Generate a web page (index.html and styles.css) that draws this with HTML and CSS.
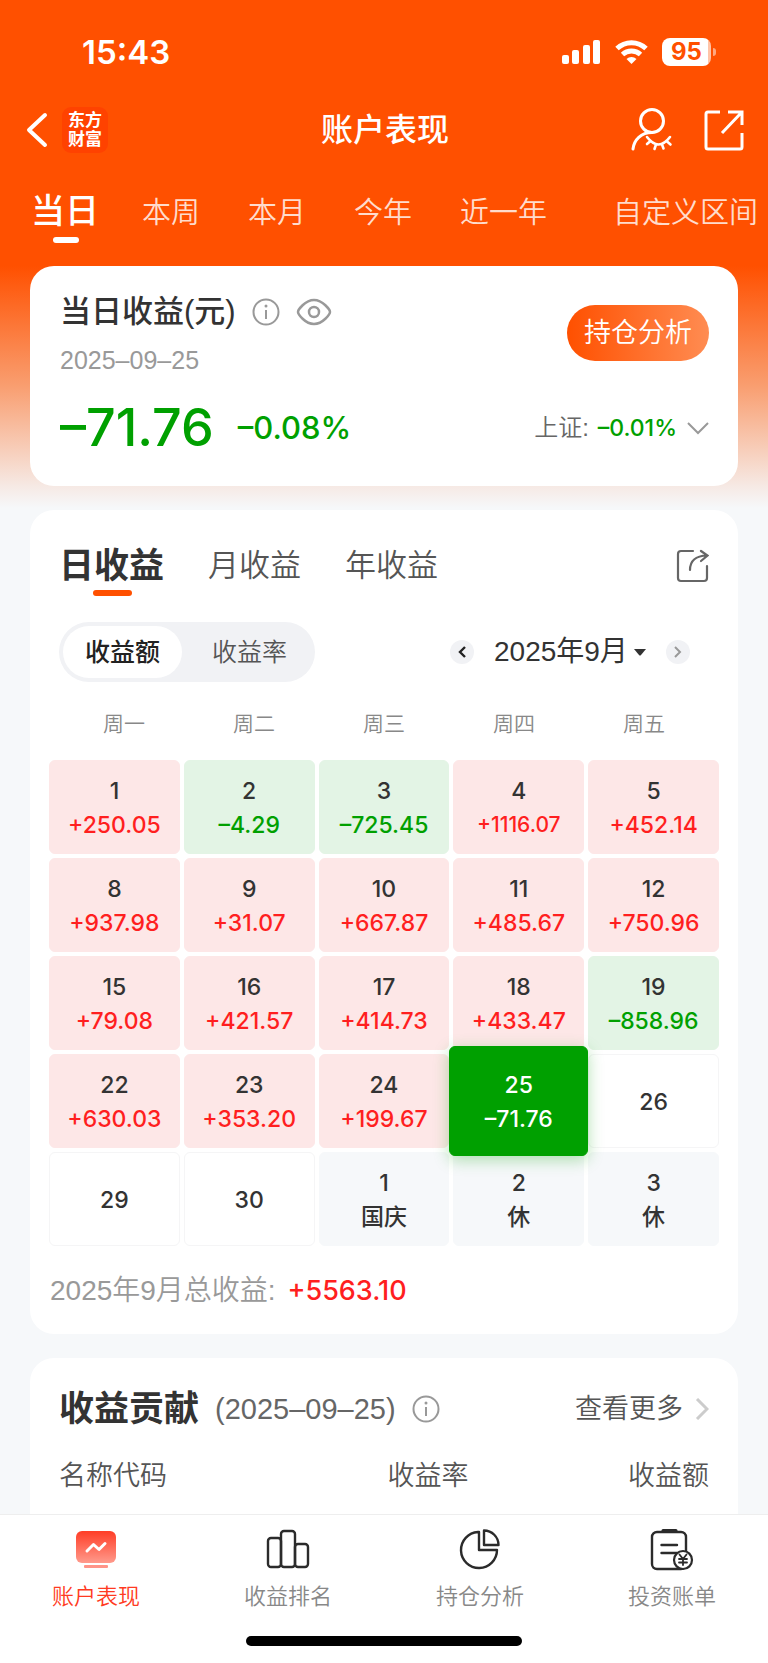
FILE: index.html
```html
<!DOCTYPE HTML>
<html lang="zh-CN">
<head>
	<meta charset="UTF-8">
	<meta name="viewport" content="width=device-width, initial-scale=1">
	<title>账户表现</title>
	<link rel="stylesheet" href="styles.css">
</head>
<body>
	<div class="top">
		<div class="status">
			<span class="status_time">15:43</span>
			<div class="status_icons">
				<svg width="39" height="25" viewBox="0 0 39 25" fill="#fff"><rect x="0" y="15" width="7" height="9" rx="2"/><rect x="10" y="10" width="7" height="14" rx="2"/><rect x="21" y="5" width="7" height="19" rx="2"/><rect x="31" y="0" width="7" height="24" rx="2"/></svg>
				<svg width="33" height="25" viewBox="0 0 33 25" fill="none" stroke="#fff" stroke-width="5"><path d="M2 8.500A21 21 0 0 1 31 8.500"/><path d="M7.500 14.500A13.500 13.500 0 0 1 25.500 14.500"/><path d="M16.500 24L11.500 19A7.500 7.500 0 0 1 21.500 19Z" fill="#fff" stroke="none"/></svg>
				<div class="battery">95</div>
			</div>
		</div>
		<!-- status end -->
		<header class="header">
			<div class="header_side">
				<button type="button" class="icon_btn" aria-label="返回"><svg width="22" height="36" viewBox="0 0 22 36" fill="none" stroke="#fff" stroke-width="4" stroke-linecap="round" stroke-linejoin="round"><path d="M19 3L3 18L19 33"/></svg></button>
				<span class="logo">东方<br>财富</span>
			</div>
			<h1 class="header_title">账户表现</h1>
			<div class="header_side header_right">
				<button type="button" class="icon_btn" aria-label="隐私"><svg width="44" height="46" viewBox="0 0 44 46" fill="none" stroke="#fff" stroke-width="3" stroke-linecap="round"><circle cx="22" cy="14" r="11.500"/><path d="M3 42C4 33 11 25.500 22 25.500"/><path d="M17 30Q28.500 45 40 30M20.500 34L17 37M26 37.500L24.500 42M32 37.500L33.500 41.500M36.500 34L40.500 37.500" stroke-width="2.600"/></svg></button>
				<button type="button" class="icon_btn" aria-label="分享"><svg width="40" height="41" viewBox="0 0 40 41" fill="none" stroke="#fff" stroke-width="3"><path d="M16 2H4Q2 2 2 4V37Q2 39 4 39H36Q38 39 38 37V23M24 2H38V15M18 23L37 3"/></svg></button>
			</div>
		</header>
		<!-- header end -->
		<nav class="tabs">
			<a href="#" class="tab current">当日</a>
			<a href="#" class="tab">本周</a>
			<a href="#" class="tab">本月</a>
			<a href="#" class="tab">今年</a>
			<a href="#" class="tab">近一年</a>
			<a href="#" class="tab">自定义区间</a>
		</nav>
	</div>
	<!-- top end -->

	<main class="main">
		<section class="card today">
			<div class="today_head">
				<div>
					<div class="today_title">
						<h2>当日收益(元)</h2>
						<svg width="28" height="28" viewBox="0 0 28 28" fill="none" stroke="#999" stroke-width="2"><circle cx="14" cy="14" r="12.500"/><path d="M14 12V21"/><circle cx="14" cy="8" r="1.500" fill="#999" stroke="none"/></svg>
						<button type="button" class="icon_btn" aria-label="显示金额"><svg width="36" height="28" viewBox="0 0 36 28" fill="none" stroke="#999" stroke-width="2.500"><path d="M2 14C2 12 9 2 18 2S34 12 34 14S27 26 18 26S2 16 2 14Z"/><circle cx="18" cy="14" r="5"/></svg></button>
					</div>
					<div class="today_date">2025–09–25</div>
				</div>
				<button type="button" class="btn_analysis">持仓分析</button>
			</div>
			<div class="today_data">
				<span class="today_value">–71.76</span>
				<span class="today_rate">–0.08%</span>
				<span class="today_index">上证: <b>–0.01%</b></span>
				<svg width="22" height="14" viewBox="0 0 22 14" fill="none" stroke="#999" stroke-width="2"><path d="M1 2L11 12L21 2"/></svg>
			</div>
		</section>
		<!-- today end -->

		<section class="card profit">
			<div class="profit_tabs">
				<button type="button" class="profit_tab current">日收益</button>
				<button type="button" class="profit_tab">月收益</button>
				<button type="button" class="profit_tab">年收益</button>
				<button type="button" class="icon_btn profit_share" aria-label="分享收益"><svg width="33" height="34" viewBox="0 0 33 34" fill="none" stroke="#666" stroke-width="2.200" stroke-linecap="round"><path d="M17 2H5Q2 2 2 5V29Q2 32 5 32H28Q31 32 31 29V17M14 21Q14 7 31 6.500M25 2L31.500 6.500L25 12"/></svg></button>
			</div>
			<div class="profit_bar">
				<div class="switch">
					<button type="button" class="switch_item current">收益额</button>
					<button type="button" class="switch_item">收益率</button>
				</div>
				<div class="month">
					<button type="button" class="month_btn" aria-label="上个月"><svg width="8" height="12" viewBox="0 0 8 12" fill="none" stroke="#222" stroke-width="2.400"><path d="M7 1L2 6L7 11"/></svg></button>
					<label class="month_pick">
						<select aria-label="选择月份"><option>2025年9月</option></select>
						<svg width="12" height="7" viewBox="0 0 12 7" fill="#333"><path d="M0 0H12L7 6Q6 7 5 6Z"/></svg>
					</label>
					<button type="button" class="month_btn" aria-label="下个月"><svg width="8" height="12" viewBox="0 0 8 12" fill="none" stroke="#999" stroke-width="2"><path d="M1 1L6 6L1 11"/></svg></button>
				</div>
			</div>
			<div class="week">
				<span>周一</span><span>周二</span><span>周三</span><span>周四</span><span>周五</span>
			</div>
			<div class="days">
				<button type="button" class="day up">1<b>+250.05</b></button>
				<button type="button" class="day down">2<b>–4.29</b></button>
				<button type="button" class="day down">3<b>–725.45</b></button>
				<button type="button" class="day up long">4<b>+1116.07</b></button>
				<button type="button" class="day up">5<b>+452.14</b></button>

				<button type="button" class="day up">8<b>+937.98</b></button>
				<button type="button" class="day up">9<b>+31.07</b></button>
				<button type="button" class="day up">10<b>+667.87</b></button>
				<button type="button" class="day up">11<b>+485.67</b></button>
				<button type="button" class="day up">12<b>+750.96</b></button>

				<button type="button" class="day up">15<b>+79.08</b></button>
				<button type="button" class="day up">16<b>+421.57</b></button>
				<button type="button" class="day up">17<b>+414.73</b></button>
				<button type="button" class="day up">18<b>+433.47</b></button>
				<button type="button" class="day down">19<b>–858.96</b></button>

				<button type="button" class="day up">22<b>+630.03</b></button>
				<button type="button" class="day up">23<b>+353.20</b></button>
				<button type="button" class="day up">24<b>+199.67</b></button>
				<button type="button" class="day selected">25<b>–71.76</b></button>
				<button type="button" class="day">26</button>

				<button type="button" class="day">29</button>
				<button type="button" class="day">30</button>
				<button type="button" class="day rest">1<b>国庆</b></button>
				<button type="button" class="day rest">2<b>休</b></button>
				<button type="button" class="day rest">3<b>休</b></button>
			</div>
			<!-- days end -->
			<p class="total">2025年9月总收益: <b>+5563.10</b></p>
		</section>
		<!-- profit end -->

		<section class="card contrib">
			<div class="contrib_head">
				<h2>收益贡献</h2>
				<span class="contrib_date">(2025–09–25)</span>
				<svg width="28" height="28" viewBox="0 0 28 28" fill="none" stroke="#999" stroke-width="2"><circle cx="14" cy="14" r="12.500"/><path d="M14 12V21"/><circle cx="14" cy="8" r="1.500" fill="#999" stroke="none"/></svg>
				<a href="#" class="more">查看更多<svg width="14" height="22" viewBox="0 0 14 22" fill="none" stroke="#ccc" stroke-width="3"><path d="M2 1L12 11L2 21"/></svg></a>
			</div>
			<table class="contrib_table">
				<thead>
					<tr><th scope="col">名称代码</th><th scope="col">收益率</th><th scope="col">收益额</th></tr>
				</thead>
			</table>
		</section>
		<!-- contrib end -->
	</main>

	<footer class="footer">
		<nav class="menu">
			<a href="#" class="menu_item current">
				<svg width="44" height="44" viewBox="0 0 44 44"><defs><linearGradient id="screen" x1="0" y1="0" x2="0" y2="1"><stop offset="0" stop-color="#ff3d26"/><stop offset="1" stop-color="#ff9a8c"/></linearGradient></defs><rect x="2" y="3" width="40" height="32" rx="6" fill="url(#screen)"/><rect x="10" y="37" width="24" height="3" rx="1" fill="#ff9488"/><path d="M13 23L19.500 16.500L25 21.500L31 15.500" fill="none" stroke="#fff" stroke-width="3" stroke-linecap="round" stroke-linejoin="round"/></svg>
				账户表现
			</a>
			<a href="#" class="menu_item">
				<svg width="44" height="44" viewBox="0 0 44 44" fill="none" stroke="#2b2b2b" stroke-width="2.400"><rect x="2" y="10" width="13" height="29" rx="3"/><rect x="15" y="3" width="14" height="36" rx="3"/><rect x="29" y="16" width="13" height="23" rx="3"/></svg>
				收益排名
			</a>
			<a href="#" class="menu_item">
				<svg width="44" height="44" viewBox="0 0 44 44" fill="none" stroke="#2b2b2b" stroke-width="2.400" stroke-linejoin="round"><path d="M20 4A18 18 0 1 0 39 22H21V4Z"/><path d="M26 2.500V17H40.500C40.500 9 34 2.500 26 2.500Z"/></svg>
				持仓分析
			</a>
			<a href="#" class="menu_item">
				<svg width="44" height="44" viewBox="0 0 44 44" fill="none" stroke="#2b2b2b" stroke-width="2.400" stroke-linecap="round"><rect x="2" y="4" width="34" height="37" rx="5"/><path d="M13 2.500H26" stroke-width="3"/><path d="M11.500 17H27M11.500 25H27"/><circle cx="33" cy="32" r="9" fill="#fff" stroke-width="2.200"/><path d="M29.500 26.500L33 31L36.500 26.500M33 31V37M29 31H37M29 34.500H37" stroke-width="1.800"/></svg>
				投资账单
			</a>
		</nav>
		<div class="home_bar"></div>
	</footer>
</body>
</html>
```
FILE: styles.css
```css
* {
	box-sizing:border-box;
	margin:0;
	padding:0;
}
body {
	display:flex;
	flex-direction:column;
	min-height:100vh;
	color:#333;
	background:#f6f8fa linear-gradient(#ff5000 266px, #f99e70 386px, #f6e9e4 486px, #f6f8fa 508px) no-repeat;
	font:350 27px/36px "Liberation Sans", "Noto Sans CJK SC", sans-serif;
}
button, select {
	color:inherit;
	font:inherit;
	background:none;
	border:0;
	cursor:pointer;
}
a {
	color:inherit;
	text-decoration:none;
}
b {
	font-weight:500;
}
svg {
	display:block;
	flex:none;
}
.icon_btn {
	display:flex;
}

/* 顶部 */
.top {
	color:#fff;
}
.status {
	display:flex;
	align-items:center;
	justify-content:space-between;
	height:104px;
	padding:0 52px 0 82px;
}
.status_time {
	font:600 33px/40px Inter, sans-serif;
}
.status_icons {
	display:flex;
	align-items:center;
	gap:14px;
}
.battery {
	position:relative;
	width:49px;
	height:28px;
	margin-right:5px;
	color:#ff5000;
	font:700 24px/28px Inter, sans-serif;
	text-align:center;
	background:linear-gradient(90deg, #fff 46px, #ffc4a8 46px);
	border-radius:8px;
}
.battery:after {
	content:"";
	position:absolute;
	right:-5px;
	top:10px;
	width:3px;
	height:8px;
	background:#ffa880;
	border-radius:0 3px 3px 0;
}
.header {
	display:flex;
	align-items:center;
	height:52px;
	padding:0 24px 0 26px;
}
.header_side {
	display:flex;
	flex:1;
	align-items:center;
	gap:14px;
}
.header_right {
	justify-content:flex-end;
	gap:30px;
}
.header_title {
	font-size:32px;
	font-weight:500;
}
.logo {
	width:46px;
	height:46px;
	padding:4px 0;
	font-size:17px;
	font-weight:700;
	line-height:19px;
	text-align:center;
	background:#ff4200;
	border-radius:9px;
}
.tabs {
	display:flex;
	align-items:baseline;
	height:110px;
	padding:37px 10px 0 7px;
	white-space:nowrap;
}
.tab {
	padding:0 24px;
	color:#ffdccc;
	font-size:29px;
}
.tab.current {
	position:relative;
	padding-right:19px;
	color:#fff;
	font-size:34px;
	font-weight:500;
}
.tab.current:after {
	content:"";
	position:absolute;
	left:46px;
	bottom:-14px;
	width:26px;
	height:6px;
	background:#fff;
	border-radius:3px;
}
.tab:last-child {
	margin-left:auto;
	padding-right:0;
}

/* 卡片 */
.main {
	display:flex;
	flex:1;
	flex-direction:column;
	gap:24px;
	padding:0 30px;
}
.card {
	padding:0 29px;
	background:#fff;
	border-radius:24px;
}
.today {
	height:220px;
	padding-top:28px;
	padding-left:30px;
}
.today_head, .today_title, .today_data {
	display:flex;
	align-items:center;
}
.today_head {
	align-items:flex-start;
	justify-content:space-between;
}
.today_title {
	gap:16px;
}
.today_title h2 {
	font-size:31px;
	font-weight:500;
}
.today_date {
	margin-top:12px;
	color:#999;
	font-size:25px;
}
.btn_analysis {
	height:56px;
	margin-top:11px;
	padding:0 17px;
	color:#fff;
	background:linear-gradient(90deg, #ff5000, #ff8c52);
	border-radius:28px;
}
.today_data {
	margin-top:20px;
	line-height:60px;
}
.today_value, .today_rate, .today_index b {
	color:#00a000;
	font-family:Inter, sans-serif;
	font-weight:500;
}
.today_value {
	font-size:52px;
}
.today_rate {
	margin-left:24px;
	font-size:31px;
}
.today_index {
	margin:0 10px 0 auto;
	color:#666;
	font-size:24px;
}
.today_index b {
	margin-left:2px;
	font-size:23px;
}

/* 收益日历 */
.profit {
	padding-bottom:25px;
}
.profit_tabs {
	display:flex;
	align-items:center;
	gap:44px;
	height:112px;
}
.profit_tab {
	color:#555;
	font-size:31px;
}
.profit_tab.current {
	position:relative;
	color:#333;
	font-size:35px;
	font-weight:700;
}
.profit_tab.current:after {
	content:"";
	position:absolute;
	left:34px;
	bottom:-12px;
	width:39px;
	height:6px;
	background:#ff5000;
	border-radius:3px;
}
.profit_share {
	margin-left:auto;
}
.profit_bar {
	display:flex;
	align-items:center;
	justify-content:space-between;
}
.switch {
	display:flex;
	padding:4px;
	background:#f1f2f5;
	border-radius:30px;
}
.switch_item {
	height:52px;
	padding:0 22px;
	color:#555;
	font-size:25px;
	border-radius:26px;
}
.switch_item + .switch_item {
	padding:0 24px 0 30px;
}
.switch_item.current {
	color:#222;
	font-weight:500;
	background:#fff;
}
.month, .month_pick {
	display:flex;
	align-items:center;
}
.month {
	gap:20px;
	margin-right:19px;
}
.month_pick {
	gap:6px;
}
.month_pick select {
	font-size:28px;
	font-weight:400;
	appearance:none;
}
.month_btn {
	display:flex;
	align-items:center;
	justify-content:center;
	width:24px;
	height:24px;
	background:#f1f2f5;
	border-radius:50%;
}
.week {
	display:grid;
	grid-template-columns:repeat(5, 1fr);
	margin-top:24px;
	color:#888;
	font-size:21px;
	text-align:center;
}
.days {
	display:grid;
	grid-template-columns:repeat(5, 1fr);
	grid-auto-rows:94px;
	gap:4px;
	margin:18px -10px 0;
}
.day {
	display:flex;
	flex-direction:column;
	align-items:center;
	justify-content:center;
	padding-top:2px;
	font-family:Inter, "Noto Sans CJK SC", sans-serif;
	font-size:23px;
	font-weight:500;
	line-height:34px;
	border:1px solid #f5f5f6;
	border-radius:6px;
}
.day.up {
	background:#fde7e7;
	border-color:#fde7e7;
}
.day.up b {
	color:#ff1f1f;
}
.day.down {
	background:#e3f4e5;
	border-color:#e3f4e5;
}
.day.down b {
	color:#00a000;
}
.day.long b {
	font-size:21px;
}
.day.rest {
	background:#f6f8fa;
	border-color:#f6f8fa;
}
.day.selected {
	z-index:1;
	margin:-8px -4px;
	color:#fff;
	background:#00a000;
	border-color:#00a000;
	box-shadow:0 4px 16px rgba(0, 160, 0, .3);
}
.total {
	margin:27px -9px 0;
	color:#999;
	font-size:28px;
}
.total b {
	margin-left:4px;
	color:#ff1f1f;
	font-family:Inter, sans-serif;
	font-size:27px;
}

/* 收益贡献 */
.contrib {
	flex:1;
	padding-top:33px;
	padding-bottom:12px;
	border-radius:24px 24px 0 0;
}
.contrib_head {
	display:flex;
	align-items:center;
	gap:16px;
}
.contrib_head h2 {
	font-size:35px;
	font-weight:700;
}
.contrib_date {
	color:#666;
	font-size:29px;
}
.more {
	display:flex;
	align-items:center;
	gap:12px;
	margin-left:auto;
	color:#555;
}
.contrib_table {
	width:100%;
	margin-top:31px;
	color:#555;
	border-collapse:collapse;
	table-layout:fixed;
}
.contrib_table th {
	font-weight:350;
	text-align:right;
}
.contrib_table th:first-child {
	text-align:left;
}
.contrib_table th:nth-child(2) {
	width:30%;
}
.contrib_table th:last-child {
	width:37%;
}

/* 底部导航 */
.footer {
	background:#fff;
	border-top:1px solid #eee;
}
.menu {
	display:flex;
	padding-top:13px;
}
.menu_item {
	display:flex;
	flex:1;
	flex-direction:column;
	align-items:center;
	gap:7px;
	color:#888;
	font-size:22px;
}
.menu_item.current {
	color:#ff3a22;
}
.home_bar {
	width:36%;
	height:10px;
	margin:21px auto 17px;
	background:#000;
	border-radius:5px;
}
```
